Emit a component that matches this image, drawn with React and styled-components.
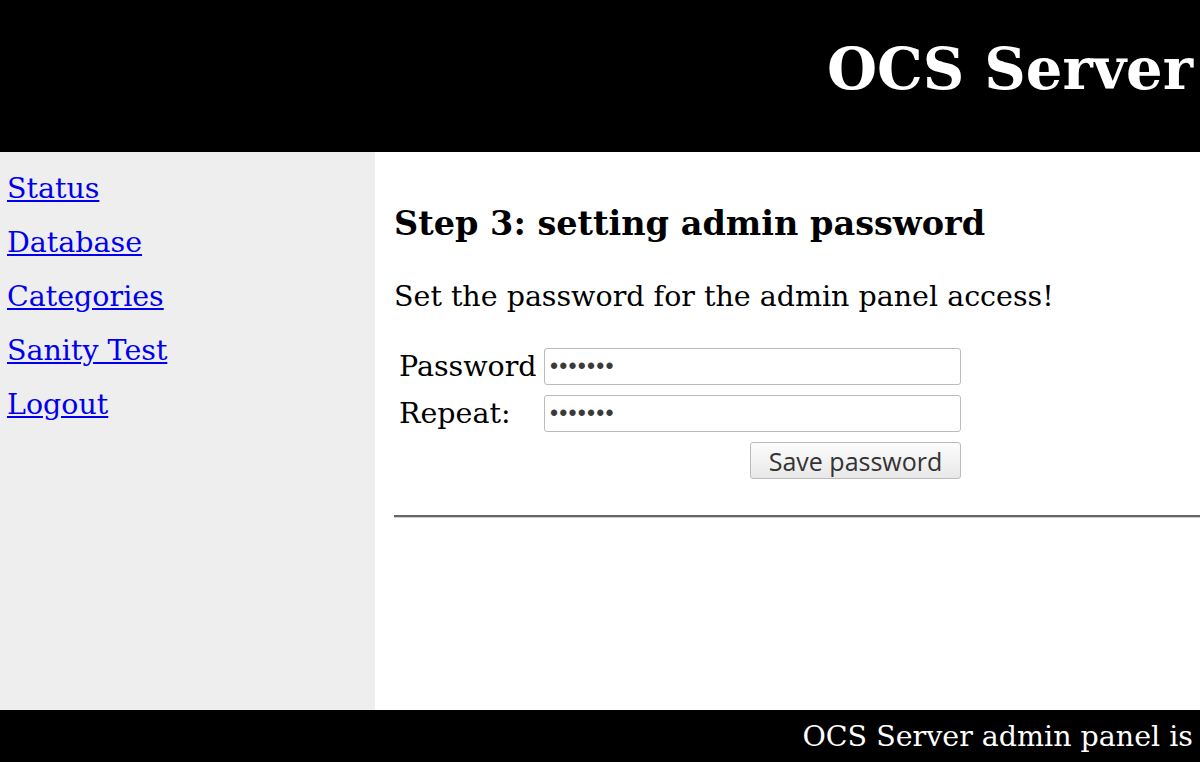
import React from "react";
import styled, { createGlobalStyle } from "styled-components";

const Global = createGlobalStyle`
  html, body { margin: 0; padding: 0; background: #fff; }
  body { font-family: "DejaVu Serif", serif; overflow: hidden; }
`;

const Page = styled.div`
  width: 1200px;
  height: 762px;
  display: flex;
  flex-direction: column;
  overflow: hidden;
`;

const Header = styled.header`
  height: 152px;
  flex: none;
  background: #000;
  color: #fff;
  display: flex;
  align-items: center;
  justify-content: flex-end;
  padding: 0 7px 12px 0;
  box-sizing: border-box;
  white-space: nowrap;
`;

const Title = styled.h1`
  margin: 0;
  font-family: "DejaVu Serif", serif;
  font-weight: bold;
  font-size: 57.5px;
  line-height: 1;
`;

const Body = styled.div`
  flex: 1;
  display: flex;
`;

const Sidebar = styled.nav`
  width: 375px;
  flex: none;
  background: #eee;
  padding: 20px 0 0 7px;
  box-sizing: border-box;
  display: flex;
  flex-direction: column;
  align-items: flex-start;
  gap: 20px;
`;

const NavLink = styled.a`
  color: #00e;
  font-size: 28.5px;
  line-height: 34px;
  text-decoration: underline;
  cursor: pointer;
`;

const Main = styled.main`
  flex: 1;
  padding: 52px 0 0 19px;
  box-sizing: border-box;
`;

const Heading = styled.h3`
  margin: 0;
  font-size: 33.5px;
  font-weight: bold;
  line-height: 40px;
`;

const Para = styled.p`
  margin: 36px 0 0;
  font-size: 28.5px;
  line-height: 34px;
`;

const Form = styled.form`
  margin-top: 34px;
  display: grid;
  grid-template-columns: 145px 417px;
  row-gap: 10px;
  padding-left: 5px;
  align-items: center;
`;

const Label = styled.label`
  font-size: 28.5px;
  line-height: 34px;
`;

const Input = styled.input`
  height: 37px;
  box-sizing: border-box;
  border: 1px solid #bbb;
  border-radius: 3px;
  font-size: 23px;
  color: #3a3a3a;
  padding: 0 5px;
  letter-spacing: 1.2px;
`;

const ButtonCell = styled.div`
  grid-column: 1 / 3;
  display: flex;
  justify-content: flex-end;
`;

const Button = styled.button`
  height: 37px;
  width: 211px;
  padding: 0;
  font-family: "Open Sans", "DejaVu Sans", sans-serif;
  font-size: 25px;
  color: #333;
  background: linear-gradient(#fcfcfc, #e8e8e8);
  border: 1px solid #bbb;
  border-radius: 3px;
`;

const Rule = styled.hr`
  margin: 36px 0 0;
  border: none;
  border-top: 2px solid #666;
  border-bottom: 1px solid #ccc;
`;

const Footer = styled.footer`
  height: 52px;
  flex: none;
  background: #000;
  color: #fff;
  display: flex;
  align-items: center;
  justify-content: flex-end;
  padding-right: 7px;
  white-space: nowrap;
  font-size: 28.5px;
`;

export default function App() {
  return (
    <>
      <Global />
      <Page>
        <Header>
          <Title>OCS Server</Title>
        </Header>
        <Body>
          <Sidebar>
            <NavLink>Status</NavLink>
            <NavLink>Database</NavLink>
            <NavLink>Categories</NavLink>
            <NavLink>Sanity Test</NavLink>
            <NavLink>Logout</NavLink>
          </Sidebar>
          <Main>
            <Heading>Step 3: setting admin password</Heading>
            <Para>Set the password for the admin panel access!</Para>
            <Form onSubmit={(e) => e.preventDefault()}>
              <Label>Password</Label>
              <Input type="password" defaultValue="1234567" />
              <Label>Repeat:</Label>
              <Input type="password" defaultValue="1234567" />
              <ButtonCell>
                <Button type="button">Save password</Button>
              </ButtonCell>
            </Form>
            <Rule />
          </Main>
        </Body>
        <Footer>OCS Server admin panel is</Footer>
      </Page>
    </>
  );
}
